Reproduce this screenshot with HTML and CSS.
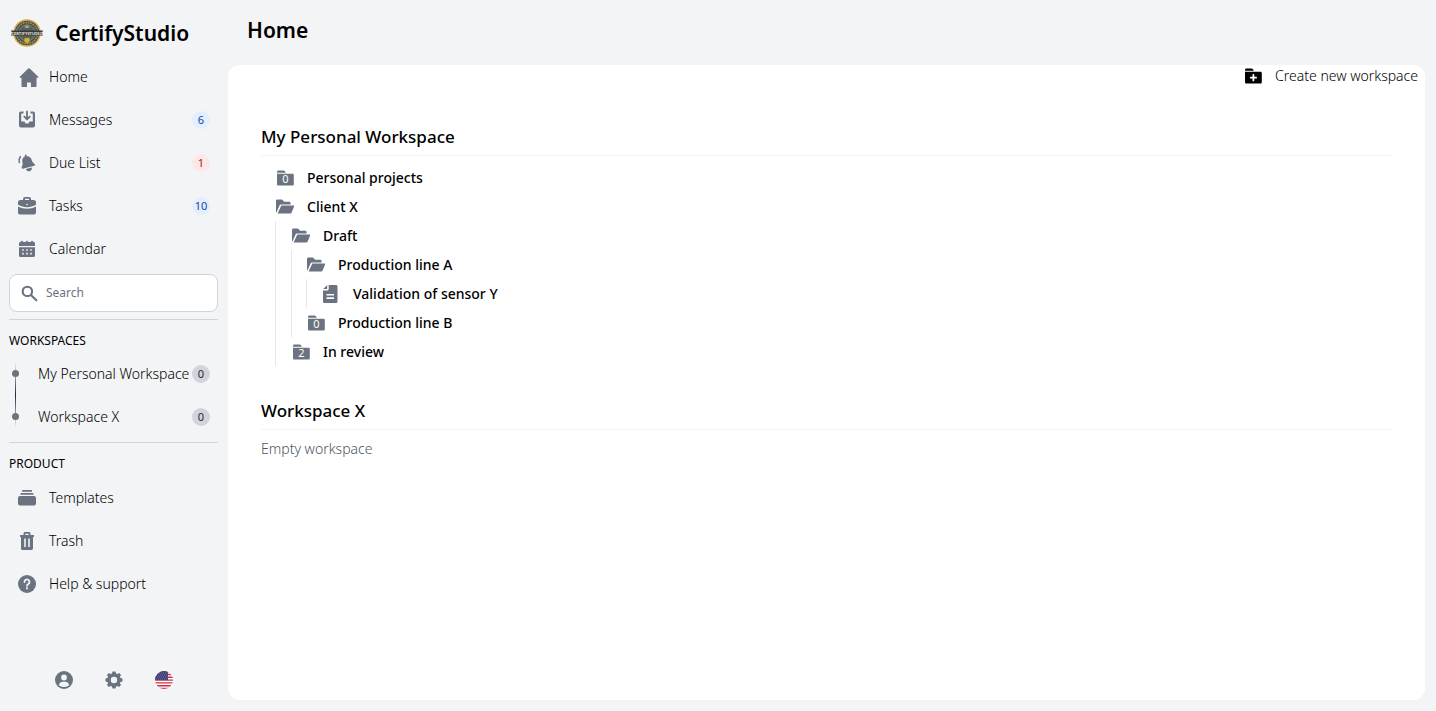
FILE: index.html
```html
<!DOCTYPE html>
<html lang="en">
<head>
    <meta charset="UTF-8">
    <meta name="viewport" content="width=device-width, initial-scale=1.0">
    <title>CertifyStudio - Home</title>
    <link rel="stylesheet" href="styles.css">
</head>
<body>

<svg class="sprite" aria-hidden="true">
    <symbol id="folder-open" viewBox="0 0 20 20">
        <path d="M1 15V4a1.400 1.400 0 0 1 1.400-1.400h4.200c.5 0 .9.200 1.200.6L9 4.800h5.200c.8 0 1.400.6 1.400 1.400V7.500H6.200c-.9 0-1.500.5-1.800 1.200L1.500 15.500z"/>
        <path d="M6.300 8.500h12.200c.5 0 .8.500.6 1l-2.600 6.300c-.2.500-.6.800-1.200.8H2.600z"/>
    </symbol>
    <symbol id="folder" viewBox="0 0 20 20">
        <path d="M2 4c0-.8.600-1.500 1.300-1.500h5.200c.5 0 .9.200 1.200.6L10.900 4.800H2z"/>
        <path d="M2 5.700h15.500c.7 0 1.300.6 1.300 1.300v9.200c0 .8-.6 1.400-1.300 1.400H3.300c-.7 0-1.300-.6-1.300-1.400z"/>
    </symbol>
    <symbol id="file" viewBox="0 0 20 20">
        <path d="M6.200 1v4H2.200z"/>
        <path fill-rule="evenodd" d="M7.700 1H15c.9 0 1.500.7 1.500 1.500v15c0 .9-.6 1.500-1.500 1.500H3.500C2.600 19 2 18.400 2 17.500V6.500h4.200c.9 0 1.500-.6 1.500-1.500zM5.500 10v1.600H13V10zm0 3.300v1.600H13v-1.600z"/>
    </symbol>
</svg>

<div class="layout">
    <aside class="sidebar">
        <a class="brand" href="#">
            <svg class="brand-logo" viewBox="0 0 34 28" aria-hidden="true">
                <circle cx="17" cy="14" r="13" fill="#47515a" stroke="#d9ad3d" stroke-width="1.500"/>
                <circle cx="17" cy="14" r="10.500" fill="none" stroke="#a89a5c" stroke-width="1.500" stroke-dasharray="1.500 1"/>
                <circle cx="17" cy="14" r="8" fill="#59604f" stroke="#8b875f"/>
                <path d="M17 5l1 2.500h2l-1.500 1.500h-3L14 7.500h2z" fill="#a7a78b"/>
                <path d="M14.500 19h5v4l-2.500 1.500-2.500-1.500z" fill="#d0b02e"/>
                <path d="M1 11.500h32l-1 2.500 1 2.500H1L2 14z" fill="#303944"/>
                <text x="17" y="15.500" class="logo-text">CERTIFYSTUDIO</text>
            </svg>
            <span>CertifyStudio</span>
        </a>

        <nav>
            <ul class="menu">
                <li><a class="menu-link" href="#">
                    <svg class="icon" viewBox="0 0 20 20"><path d="M11.300 1.500a1 1 0 0 1 1.400 0l8.300 8c.7.700.5 1.200-.3 1.200H19.500V19c0 .6-.4 1-1 1H14v-4.500h-4V20H5.500c-.6 0-1-.4-1-1v-8.300H3.300c-.8 0-1-.5-.3-1.200z"/></svg>
                    <span>Home</span></a></li>
                <li><a class="menu-link" href="#">
                    <svg class="icon" viewBox="0 0 20 20"><path d="M4 1.500h2.500v2H4.200v8h3.300l1 2h3l1-2h3.300v-8h-2.300v-2H16a2 2 0 0 1 2 2v12a2 2 0 0 1-2 2H4a2 2 0 0 1-2-2v-12a2 2 0 0 1 2-2z"/><path d="M10 1.500v7.500M7.300 6.700l2.700 2.700 2.700-2.700" fill="none" stroke="currentColor" stroke-width="1.800" stroke-linecap="round" stroke-linejoin="round"/></svg>
                    <span>Messages</span><span class="badge badge-blue">6</span></a></li>
                <li><a class="menu-link" href="#">
                    <svg class="icon" viewBox="0 0 20 20"><g transform="rotate(-14 10 10)"><path d="M10.500 1.500c.6 0 1 .4 1 1v.8a5 5 0 0 1 3.800 4.900c0 3.500 2 3.800 2 5.300 0 .7-.3 1-.9 1H4.600c-.6 0-.9-.3-.9-1 0-1.500 2-1.800 2-5.300a5 5 0 0 1 3.800-4.900v-.8c0-.6.400-1 1-1zM7.500 15.500h6a3 3 0 0 1-6 0z"/><path d="M2.700 7.500c0-2.200.9-4 2.300-5.200" fill="none" stroke="currentColor" stroke-width="1.600" stroke-linecap="round"/></g></svg>
                    <span>Due List</span><span class="badge badge-red">1</span></a></li>
                <li><a class="menu-link" href="#">
                    <svg class="icon" viewBox="0 0 20 20"><path fill-rule="evenodd" d="M6 4V3a2 2 0 0 1 2-2h4a2 2 0 0 1 2 2v1h2.500A2.500 2.500 0 0 1 19 6.500v2.200c-5.500 3.300-12.500 3.300-18 0V6.500A2.500 2.500 0 0 1 3.500 4zm2 0h4V2.800H8zm2 3.800a.8.800 0 1 0 0 1.600.8.800 0 0 0 0-1.600z"/><path d="M1 10.500c5.500 3 12.500 3 18 0v6a2 2 0 0 1-2 2H3a2 2 0 0 1-2-2z"/></svg>
                    <span>Tasks</span><span class="badge badge-blue">10</span></a></li>
                <li><a class="menu-link" href="#">
                    <svg class="icon" viewBox="0 0 20 20"><path d="M2 7V4.500C2 3.700 2.600 3 3.400 3L5 1.500 6.500 3h2L10 1.500 11.500 3h2L15 1.500 16.600 3c.8 0 1.400.7 1.400 1.500V7z"/><path fill-rule="evenodd" d="M2 8.300h16v8.200c0 .8-.6 1.500-1.400 1.500H3.400c-.8 0-1.400-.7-1.400-1.500zM5.200 10.200v1.600h1.600v-1.600zm4 0v1.600h1.600v-1.600zm4 0v1.600h1.600v-1.600zm-8 3.600v1.600h1.600v-1.600zm4 0v1.600h1.600v-1.600zm4 0v1.600h1.600v-1.600z"/></svg>
                    <span>Calendar</span></a></li>
            </ul>
        </nav>

        <form class="search" role="search">
            <svg class="search-icon" viewBox="0 0 20 20" aria-hidden="true"><circle cx="7.500" cy="7.500" r="5.500"/><path d="M12 12l6 6"/></svg>
            <input type="search" placeholder="Search" aria-label="Search">
        </form>

        <section class="section">
            <h2 class="section-title">Workspaces</h2>
            <ul class="menu timeline">
                <li><a class="menu-link" href="#"><i class="dot"></i><span>My Personal Workspace</span><span class="badge badge-gray">0</span></a></li>
                <li><a class="menu-link" href="#"><i class="dot"></i><span>Workspace X</span><span class="badge badge-gray">0</span></a></li>
            </ul>
        </section>

        <section class="section">
            <h2 class="section-title">Product</h2>
            <ul class="menu">
                <li><a class="menu-link" href="#">
                    <svg class="icon" viewBox="0 0 20 20"><path d="M6 2h8c.6 0 1 .4 1 1v.700H5V3c0-.6.400-1 1-1zM4.500 5h11c.6 0 1 .4 1 1v.700h-13V6c0-.6.400-1 1-1zM3 8h14a2 2 0 0 1 2 2v5.500a2 2 0 0 1-2 2H3a2 2 0 0 1-2-2V10a2 2 0 0 1 2-2z"/></svg>
                    <span>Templates</span></a></li>
                <li><a class="menu-link" href="#">
                    <svg class="icon" viewBox="0 0 20 20"><path fill-rule="evenodd" d="M6.500 4V2.500c0-.8.700-1.500 1.500-1.500h4c.8 0 1.500.7 1.500 1.500V4H17v2h-1v11.500c0 .8-.7 1.500-1.500 1.500h-9c-.8 0-1.500-.7-1.500-1.500V6H3V4zM8.300 4h3.400V2.700H8.300zM7.200 7.500v8.500h1.600V7.500zm4 0v8.500h1.600V7.500z"/></svg>
                    <span>Trash</span></a></li>
                <li><a class="menu-link" href="#">
                    <svg class="icon" viewBox="0 0 20 20"><circle cx="10" cy="10" r="9"/><path d="M7.500 8a2.500 2.500 0 1 1 3.800 2.100c-.9.500-1.300.8-1.300 1.700M10 14v.5" fill="none" stroke="#f3f4f6" stroke-width="1.800" stroke-linecap="round"/></svg>
                    <span>Help &amp; support</span></a></li>
            </ul>
        </section>

        <div class="sidebar-footer">
            <button type="button" aria-label="Account">
                <svg class="icon" viewBox="0 0 20 20"><circle cx="10" cy="10" r="9"/><circle cx="10" cy="7.500" r="2.900" fill="#f3f4f6"/><path d="M4.800 15.200c.6-2.300 2-3.400 4-3.400h2.400c2 0 3.400 1.100 4 3.400-2.800 2.400-7.600 2.400-10.400 0z" fill="#f3f4f6"/></svg>
            </button>
            <button type="button" aria-label="Settings">
                <svg class="icon" viewBox="0 0 20 20"><path fill-rule="evenodd" d="M8.500 1.500h3l.6 2 1.200.5 1.900-1L17 5l-1 1.800.5 1.200 2 .6v2.900l-2 .5-.5 1.200 1 1.900-1.900 1.900-1.800-1-1.200.5-.6 2h-3l-.5-2-1.200-.5-1.900 1L3 15.100l1-1.900-.5-1.200-2-.5V8.600l2-.6L4 6.800 3 5l1.900-2 1.900 1L8 3.500zM10 6.800a3.200 3.200 0 1 0 0 6.400 3.200 3.200 0 0 0 0-6.400z"/></svg>
            </button>
            <button type="button" aria-label="Language: English (US)">
                <svg class="icon" viewBox="0 0 20 20">
                    <clipPath id="round"><circle cx="10" cy="10" r="9"/></clipPath>
                    <g clip-path="url(#round)">
                        <path fill="#fff" d="M0 0h20v20H0z"/>
                        <path d="M0 1.700h20M0 4.500h20M0 7.300h20M0 10.100h20M0 12.900h20M0 15.700h20M0 18.500h20" stroke="#c8324a" stroke-width="1.400"/>
                        <path fill="#3f3f78" d="M0 0h14v10H0z"/>
                        <path d="M3 3h11M2 5h12M3 7h11M2 9h12" stroke="#a9a9c8" stroke-width=".7" stroke-dasharray=".7 1.300"/>
                    </g>
                </svg>
            </button>
        </div>
    </aside>

    <main class="main">
        <h1 class="page-title">Home</h1>

        <div class="panel">
            <div class="toolbar">
                <button type="button" class="create-btn">
                    <svg class="icon" viewBox="0 0 20 20"><use href="#folder"/><path d="M10.400 9v5.400M7.700 11.700h5.400" stroke="#fff" stroke-width="1.800" stroke-linecap="round"/></svg>
                    <span>Create new workspace</span>
                </button>
            </div>

            <section class="workspace">
                <h2>My Personal Workspace</h2>
                <ul class="tree">
                    <li>
                        <a class="node" href="#"><svg class="icon" viewBox="0 0 20 20"><use href="#folder"/><text x="10.500" y="15" class="count">0</text></svg>Personal projects</a>
                    </li>
                    <li>
                        <a class="node" href="#"><svg class="icon"><use href="#folder-open"/></svg>Client X</a>
                        <ul>
                            <li>
                                <a class="node" href="#"><svg class="icon"><use href="#folder-open"/></svg>Draft</a>
                                <ul>
                                    <li>
                                        <a class="node" href="#"><svg class="icon"><use href="#folder-open"/></svg>Production line A</a>
                                        <ul>
                                            <li><a class="node" href="#"><svg class="icon"><use href="#file"/></svg>Validation of sensor Y</a></li>
                                        </ul>
                                    </li>
                                    <li>
                                        <a class="node" href="#"><svg class="icon" viewBox="0 0 20 20"><use href="#folder"/><text x="10.500" y="15" class="count">0</text></svg>Production line B</a>
                                    </li>
                                </ul>
                            </li>
                            <li>
                                <a class="node" href="#"><svg class="icon" viewBox="0 0 20 20"><use href="#folder"/><text x="10.500" y="15" class="count">2</text></svg>In review</a>
                            </li>
                        </ul>
                    </li>
                </ul>
            </section>

            <section class="workspace">
                <h2>Workspace X</h2>
                <p class="empty">Empty workspace</p>
            </section>
        </div>
    </main>
</div>

</body>
</html>
```
FILE: styles.css
```css
* {
    box-sizing: border-box;
}
body {
    margin: 0;
    background: #f3f4f6;
    color: #000;
    font-family: "Noto Sans", "Open Sans", sans-serif;
    font-size: 14px;
    line-height: 20px;
}
h1, h2, p, ul {
    margin: 0;
    padding: 0;
}
ul {
    list-style: none;
}
a {
    color: inherit;
    text-decoration: none;
}
button {
    padding: 0;
    border: none;
    background: none;
    color: inherit;
    font: inherit;
    cursor: pointer;
}
.sprite {
    display: none;
}
.icon {
    display: block;
    flex: none;
    width: 20px;
    height: 20px;
    fill: currentColor;
    color: #6b7280;
    overflow: visible;
}
.layout {
    display: flex;
    min-height: 100vh;
}

/* sidebar */
.sidebar {
    display: flex;
    flex-direction: column;
    flex: none;
    width: 228px;
    padding: 11px 10px 20px 9px;
}
.brand {
    display: flex;
    align-items: center;
    gap: 11px;
    height: 44px;
    padding-left: 1px;
    font-size: 21px;
    font-weight: 600;
}
.brand-logo {
    width: 34px;
    height: 28px;
}
.logo-text {
    fill: #e8e3c8;
    font-size: 4px;
    font-weight: 700;
    text-anchor: middle;
}
.menu-link {
    display: flex;
    align-items: center;
    gap: 12px;
    height: 43px;
    padding: 0 8px;
    font-weight: 300;
    white-space: nowrap;
}
.badge {
    flex: none;
    width: 18px;
    height: 18px;
    margin-left: auto;
    border-radius: 50%;
    font-size: 11px;
    font-weight: 400;
    line-height: 18px;
    text-align: center;
}
.badge-blue {
    background: #e1effe;
    color: #1e429f;
}
.badge-red {
    background: #fde8e8;
    color: #9b1c1c;
}
.badge-gray {
    background: #d1d5db;
    color: #1f2937;
}
.search {
    display: flex;
    align-items: center;
    gap: 8px;
    height: 38px;
    margin: 4px 0 7px;
    padding: 0 11px;
    border: 1px solid #d1d5db;
    border-radius: 8px;
    background: #fff;
}
.search-icon {
    flex: none;
    width: 17px;
    height: 17px;
    fill: none;
    stroke: #6b7280;
    stroke-width: 2.5;
    stroke-linecap: round;
}
.search input {
    flex: 1;
    min-width: 0;
    padding: 0;
    border: none;
    outline: none;
    background: none;
    font: inherit;
    font-size: 12px;
}
.search input::placeholder {
    color: #6b7280;
}
.section {
    padding-top: 10px;
    border-top: 1px solid #d1d5db;
}
.section + .section {
    margin-top: 4px;
}
.section-title {
    font-size: 12px;
    font-weight: 400;
    text-transform: uppercase;
    line-height: 22px;
}
.section + .section .section-title {
    padding-bottom: 1px;
}
.timeline {
    background: linear-gradient(transparent, #1e293b, transparent) 6px center / 1px 66px no-repeat;
}
.timeline .menu-link {
    gap: 0;
    padding-left: 3px;
}
.dot {
    width: 7px;
    height: 7px;
    margin-right: 19px;
    border-radius: 50%;
    background: #6b7280;
}
.sidebar-footer {
    display: flex;
    justify-content: center;
    gap: 30px;
    margin-top: auto;
    padding-bottom: 1px;
}

/* content */
.main {
    display: flex;
    flex-direction: column;
    flex: 1;
    padding: 0 11px 11px 0;
}
.page-title {
    padding: 14px 19px 19px;
    font-size: 21px;
    font-weight: 600;
    line-height: 32px;
}
.panel {
    flex: 1;
    border-radius: 12px;
    background: #fff;
}
.toolbar {
    display: flex;
    justify-content: flex-end;
    padding: 0 7px;
}
.create-btn {
    display: flex;
    align-items: center;
    gap: 12px;
    height: 22px;
    font-weight: 300;
}
.create-btn .icon {
    color: #000;
}
.workspace {
    padding: 37px 33px 0;
}
.workspace + .workspace {
    padding-top: 32px;
}
.workspace h2 {
    padding-bottom: 5px;
    border-bottom: 1px solid #f3f4f6;
    font-size: 17px;
    font-weight: 500;
    line-height: 26px;
}
.tree {
    padding: 7px 0 0 14px;
}
.tree ul {
    padding-left: 15px;
    border-left: 1px solid #e5e7eb;
}
.tree ul ul {
    padding-left: 14px;
}
.node {
    display: flex;
    align-items: center;
    gap: 12px;
    height: 29px;
    font-weight: 500;
}
.count {
    fill: #fff;
    font-size: 11px;
    font-weight: 400;
    text-anchor: middle;
}
.empty {
    padding-top: 9px;
    color: #4b5563;
    font-weight: 300;
}
```
